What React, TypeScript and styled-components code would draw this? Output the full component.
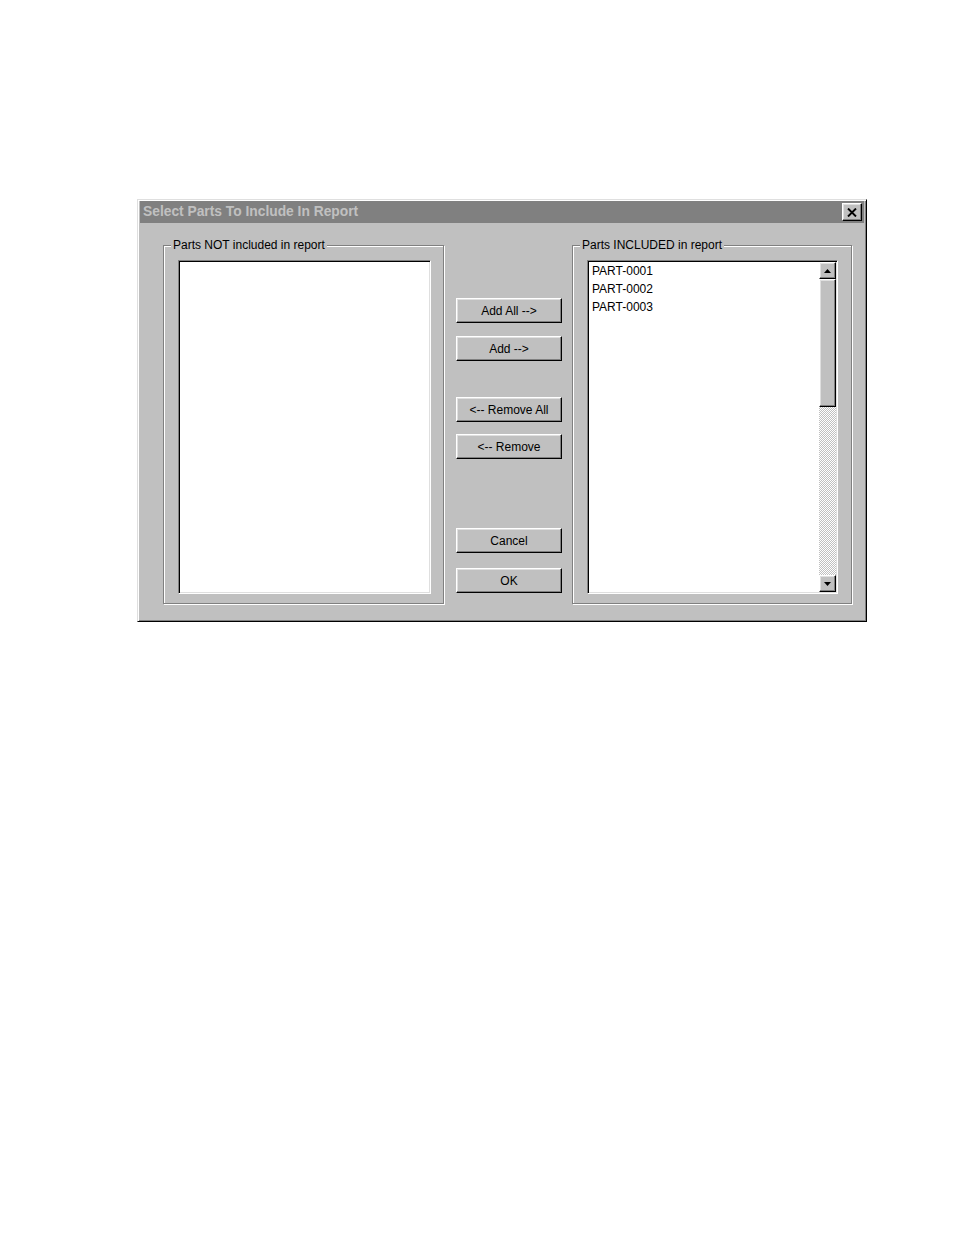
import React from "react";
import styled, { createGlobalStyle } from "styled-components";

const GlobalStyle = createGlobalStyle`
  html, body { margin: 0; padding: 0; background: #ffffff; }
  body { font-family: "Liberation Sans", Arial, sans-serif; color: #000; }
`;

const Page = styled.div`
  padding: 199px 0 0 137px;
`;

const Dialog = styled.div`
  width: 730px;
  box-sizing: border-box;
  background: #c0c0c0;
  border: 1px solid;
  border-color: #dfdfdf #000000 #000000 #dfdfdf;
  box-shadow: inset 1px 1px #ffffff, inset -1px -1px #808080;
  padding: 1px 2px 3px 2px;
`;

const TitleBar = styled.div`
  height: 22px;
  background: #808080;
  display: flex;
  align-items: center;
  justify-content: space-between;
  padding: 0 2px 0 3px;
`;

const TitleText = styled.span`
  color: #c0c0c0;
  font-weight: bold;
  font-size: 13.8px;
  line-height: 22px;
  white-space: nowrap;
`;

const raised = `
  background: #c0c0c0;
  border: 1px solid;
  border-color: #ffffff #000000 #000000 #ffffff;
  box-shadow: inset -1px -1px #808080, inset 1px 1px #dfdfdf;
  box-sizing: border-box;
`;

const CloseButton = styled.div`
  ${raised}
  width: 20px;
  height: 18px;
  display: flex;
  align-items: center;
  justify-content: center;
`;

const Body = styled.div`
  display: flex;
  align-items: flex-start;
  padding: 15px 12px 14px 23px;
`;

const Group = styled.div<{ $w: number; $pr: number }>`
  width: ${(p) => p.$w}px;
  box-sizing: border-box;
  margin-top: 7px;
  border: 1px solid #808080;
  box-shadow: inset 1px 1px #ffffff, 1px 1px #ffffff;
  padding: 0 ${(p) => p.$pr}px 9px 14px;
  display: flex;
  flex-direction: column;
`;

const GroupLabel = styled.div`
  align-self: flex-start;
  margin: -8px 0 0 -7px;
  padding: 0 2px;
  background: #c0c0c0;
  font-size: 12px;
  line-height: 14px;
  white-space: nowrap;
`;

const ListBox = styled.div`
  margin-top: 8px;
  height: 334px;
  box-sizing: border-box;
  background: #ffffff;
  border: 1px solid;
  border-color: #808080 #ffffff #ffffff #808080;
  box-shadow: inset 1px 1px #000000, inset -1px -1px #dfdfdf;
  padding: 1px;
  display: flex;
`;

const Items = styled.div`
  flex: 1;
  padding-left: 3px;
`;

const Item = styled.div`
  font-size: 12px;
  line-height: 18px;
  white-space: nowrap;
`;

const ScrollBar = styled.div`
  width: 17px;
  display: flex;
  flex-direction: column;
`;

const ArrowButton = styled.div`
  ${raised}
  height: 17px;
  display: flex;
  align-items: center;
  justify-content: center;
`;

const Track = styled.div`
  flex: 1;
  background-color: #ffffff;
  background-image: conic-gradient(#c0c0c0 25%, #ffffff 0 50%, #c0c0c0 0 75%, #ffffff 0);
  background-size: 2px 2px;
`;

const Thumb = styled.div`
  ${raised}
  height: 128px;
`;

const ButtonColumn = styled.div`
  width: 106px;
  margin: 0 10px 0 12px;
  display: flex;
  flex-direction: column;
`;

const PushButton = styled.div<{ $mt: number }>`
  ${raised}
  margin-top: ${(p) => p.$mt}px;
  height: 25px;
  display: flex;
  align-items: center;
  justify-content: center;
  font-size: 12px;
  white-space: nowrap;
`;

const Arrow = ({ up }: { up?: boolean }) => (
  <svg width="7" height="4" viewBox="0 0 7 4">
    <polygon points={up ? "3.5,0 7,4 0,4" : "0,0 7,0 3.5,4"} fill="#000" />
  </svg>
);

const CloseX = () => (
  <svg width="10" height="9" viewBox="0 0 10 9">
    <path d="M1 0.5 L9 8.5 M9 0.5 L1 8.5" stroke="#000" strokeWidth="1.9" />
  </svg>
);

const included = ["PART-0001", "PART-0002", "PART-0003"];

export default function App() {
  return (
    <>
      <GlobalStyle />
      <Page>
        <Dialog>
          <TitleBar>
            <TitleText>Select Parts To Include In Report</TitleText>
            <CloseButton>
              <CloseX />
            </CloseButton>
          </TitleBar>
          <Body>
            <Group $w={281} $pr={12}>
              <GroupLabel>Parts NOT included in report</GroupLabel>
              <ListBox>
                <Items />
              </ListBox>
            </Group>
            <ButtonColumn>
              <PushButton $mt={60}>Add All --&gt;</PushButton>
              <PushButton $mt={13}>Add --&gt;</PushButton>
              <PushButton $mt={36}>&lt;-- Remove All</PushButton>
              <PushButton $mt={12}>&lt;-- Remove</PushButton>
              <PushButton $mt={69}>Cancel</PushButton>
              <PushButton $mt={15}>OK</PushButton>
            </ButtonColumn>
            <Group $w={280} $pr={13}>
              <GroupLabel>Parts INCLUDED in report</GroupLabel>
              <ListBox>
                <Items>
                  {included.map((p) => (
                    <Item key={p}>{p}</Item>
                  ))}
                </Items>
                <ScrollBar>
                  <ArrowButton>
                    <Arrow up />
                  </ArrowButton>
                  <Track>
                    <Thumb />
                  </Track>
                  <ArrowButton>
                    <Arrow />
                  </ArrowButton>
                </ScrollBar>
              </ListBox>
            </Group>
          </Body>
        </Dialog>
      </Page>
    </>
  );
}
